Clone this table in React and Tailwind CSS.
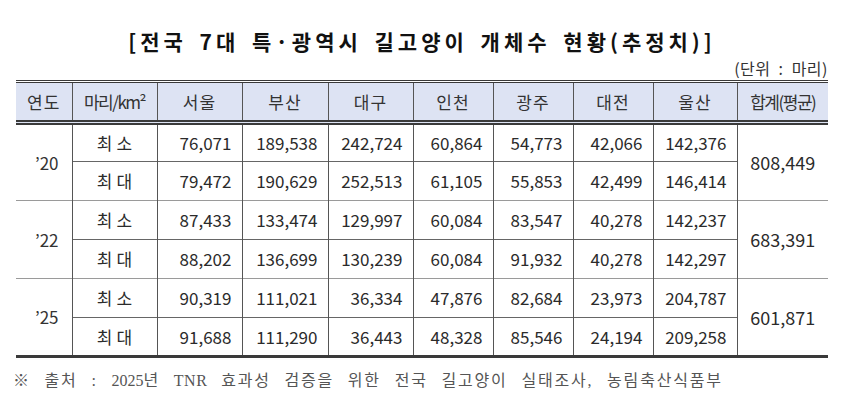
import React from "react";

const cols = [56, 85, 85, 86, 85, 80, 80, 80, 84, 91];
const heads = ["연도", "마리/km²", "서울", "부산", "대구", "인천", "광주", "대전", "울산", "합계(평균)"];
const groups = [
  { y: "'20", total: "808,449", rows: [
    ["최소", "76,071", "189,538", "242,724", "60,864", "54,773", "42,066", "142,376"],
    ["최대", "79,472", "190,629", "252,513", "61,105", "55,853", "42,499", "146,414"],
  ]},
  { y: "'22", total: "683,391", rows: [
    ["최소", "87,433", "133,474", "129,997", "60,084", "83,547", "40,278", "142,237"],
    ["최대", "88,202", "136,699", "130,239", "60,084", "91,932", "40,278", "142,297"],
  ]},
  { y: "'25", total: "601,871", rows: [
    ["최소", "90,319", "111,021", "36,334", "47,876", "82,684", "23,973", "204,787"],
    ["최대", "91,688", "111,290", "36,443", "48,328", "85,546", "24,194", "209,258"],
  ]},
];

export default function App() {
  const sans = { fontFamily: '"Noto Sans CJK KR", "Noto Sans", sans-serif' };
  return (
    <div className="w-[850px] h-[409px] bg-white overflow-hidden text-[#2b2b2b]" style={sans}>
      <div className="pl-[16px] pr-[22px] pt-[26px]">
        <div className="text-center text-[21px] leading-[30px] font-bold tracking-[4px] [word-spacing:4px] text-[#111]">
          [전국 7대 특·광역시 길고양이 개체수 현황(추정치)]
        </div>
        <div className="text-right text-[16px] leading-[20px] mt-[2px] mb-[2px] text-[#333] tracking-[0.5px] [word-spacing:4px]">(단위 : 마리)</div>
        <table className="table-fixed border-collapse w-[812px] text-[17px]">
          <colgroup>
            {cols.map((w, i) => <col key={i} style={{ width: w }} />)}
          </colgroup>
          <thead>
            <tr className="h-[41px] bg-[#dde3f3] border-t-[3px] border-t-[#3a3a3a] border-b-[5px] border-double border-b-[#3a3a3a]">
              {heads.map((h, i) => (
                <th key={i} className={`font-normal text-center text-[#333] px-0 ${i > 0 ? "border-l border-l-[#555]" : ""} ${i === 1 || i === 9 ? "tracking-[-1.5px]" : "tracking-[1px]"}`}>
                  {h}
                </th>
              ))}
            </tr>
          </thead>
          <tbody>
            {groups.map((g, gi) => g.rows.map((r, ri) => (
              <tr key={`${gi}-${ri}`} className={`h-[39px] ${ri === 0 && gi > 0 ? "border-t border-t-[#9a9a9a]" : ""} ${gi === 2 && ri === 1 ? "border-b-[3px] border-b-[#3a3a3a]" : ""}`}>
                {ri === 0 && (
                  <td rowSpan={2} className="text-center align-middle text-[#333] pl-[6px]">{g.y.replace("'", "\u2019")}</td>
                )}
                {r.map((c, ci) => (
                  <td key={ci} className={`border-l border-l-[#555] ${ri === 1 ? "border-t border-t-[#666]" : ""} ${ci === 0 ? "text-center tracking-[4px] pl-[4px]" : "text-right pr-[10px]"}`}>
                    {c}
                  </td>
                ))}
                {ri === 0 && (
                  <td rowSpan={2} className="border-l border-l-[#555] text-center align-middle text-[18px]">{g.total}</td>
                )}
              </tr>
            )))}
          </tbody>
        </table>
      </div>
      <div className="pl-[13px] mt-[12px] text-[16px] leading-[22px] text-[#555] tracking-[1.8px] [word-spacing:8px]" style={{ fontFamily: '"Liberation Serif", "Noto Sans CJK KR", serif' }}>
        ※ 출처 : <span className="tracking-[0px]">2025</span>년 <span className="tracking-[0.5px]">TNR</span> 효과성 검증을 위한 전국 길고양이 실태조사, 농림축산식품부
      </div>
    </div>
  );
}
